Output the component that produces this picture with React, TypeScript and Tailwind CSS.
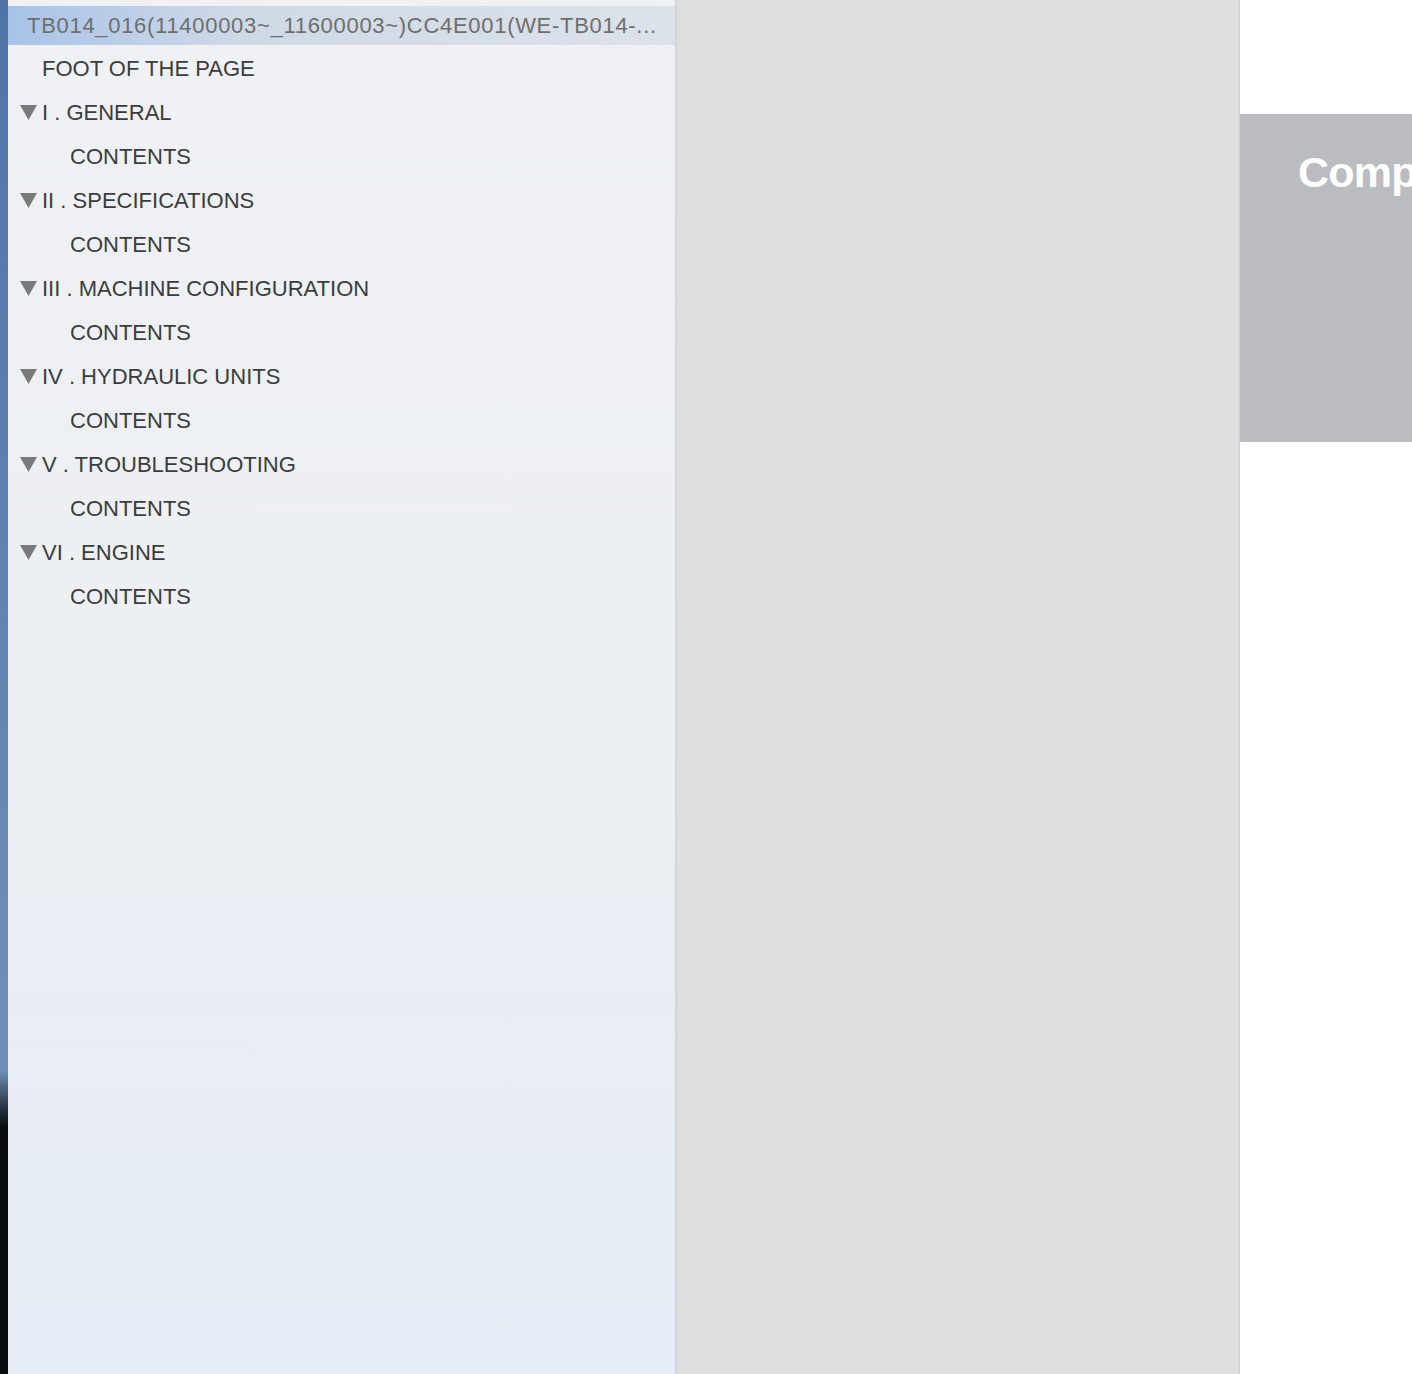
import React from "react";

const Tri = () => (
  <svg width="17" height="15" viewBox="0 0 17 15" className="shrink-0">
    <polygon points="0,0 17,0 8.5,15" fill="#7a7a7a" />
  </svg>
);

type Item = { label: string; level: 0 | 1 | 2 };

const items: Item[] = [
  { label: "FOOT OF THE PAGE", level: 0 },
  { label: "I . GENERAL", level: 1 },
  { label: "CONTENTS", level: 2 },
  { label: "II . SPECIFICATIONS", level: 1 },
  { label: "CONTENTS", level: 2 },
  { label: "III . MACHINE CONFIGURATION", level: 1 },
  { label: "CONTENTS", level: 2 },
  { label: "IV . HYDRAULIC UNITS", level: 1 },
  { label: "CONTENTS", level: 2 },
  { label: "V . TROUBLESHOOTING", level: 1 },
  { label: "CONTENTS", level: 2 },
  { label: "VI . ENGINE", level: 1 },
  { label: "CONTENTS", level: 2 },
];

export default function App() {
  return (
    <div
      className="flex h-[1374px] w-[1412px] overflow-hidden"
      style={{ fontFamily: '"Liberation Sans", Arial, sans-serif' }}
    >
      <div className="w-[8px] shrink-0 bg-gradient-to-b from-[#4f74a8] via-[#6e8fb8] via-[78%] to-[#0a0c10] to-[82%]" />
      <div className="flex w-[669px] shrink-0 flex-col border-r-2 border-[#d3d5d8] bg-gradient-to-b from-[#eff1f4] via-[#eceff3] via-[55%] to-[#e5ecf5] pt-[6px]">
        <div className="flex h-[39px] items-center bg-gradient-to-r from-[#a8c3e8] via-[#cfd9e6] via-[35%] to-[#dce2e9] pl-[19px] pr-[10px]">
          <span className="whitespace-nowrap text-[22px] tracking-[0.7px] text-[#6e6e6e]">
            TB014_016(11400003~_11600003~)CC4E001(WE-TB014-...
          </span>
        </div>
        {items.map((it, i) => (
          <div
            key={i}
            className="flex h-[44px] items-center pt-[2px] text-[22px] text-[#3c3c3c]"
          >
            {it.level === 0 && <span className="pl-[34px]">{it.label}</span>}
            {it.level === 1 && (
              <div className="flex items-center gap-[5px] pl-[12px]">
                <Tri />
                <span>{it.label}</span>
              </div>
            )}
            {it.level === 2 && <span className="pl-[62px]">{it.label}</span>}
          </div>
        ))}
      </div>
      <div className="w-[563px] shrink-0 border-r-2 border-[#d4d4d4] bg-[#dedede]" />
      <div className="min-w-0 flex-1 bg-white pt-[114px]">
        <div className="h-[328px] overflow-hidden bg-[#bbbcbf] pl-[58px] pt-[37px]">
          <div className="whitespace-nowrap text-[43px] font-bold leading-[43px] tracking-[-0.8px] text-white">
            Company
          </div>
        </div>
      </div>
    </div>
  );
}
